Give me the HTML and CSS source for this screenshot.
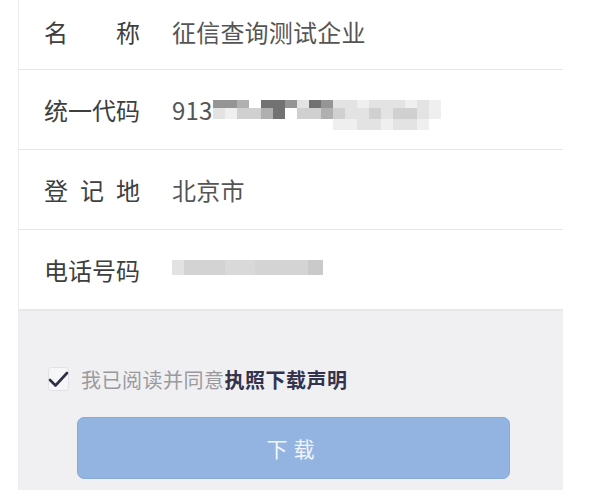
FILE: index.html
```html
<!DOCTYPE html>
<html lang="zh-CN">
<head>
    <meta charset="UTF-8">
    <meta name="viewport" content="width=device-width, initial-scale=1.0">
    <title>执照下载</title>
    <link rel="stylesheet" href="styles.css">
</head>
<body>
    <div class="panel">
        <div class="info">
            <div class="row row-first">
                <span class="label">名 称</span>
                <span class="value">征信查询测试企业</span>
            </div>
            <div class="row">
                <span class="label">统一代码</span>
                <span class="value">913</span>
                <!-- 打码部分 -->
                <div class="mosaic">
                    <i class="m2"></i><i class="m2"></i><i class="m3"></i><i></i><i class="m1"></i><i class="m1"></i><i class="m2"></i><i class="m5"></i><i class="m1"></i><i class="m2"></i><i class="m5"></i><i class="m5"></i><i class="m6"></i><i class="m5"></i><i class="m5"></i><i class="m5"></i><i class="m6"></i><i class="m5"></i><i class="m6"></i>
                    <i class="m5"></i><i class="m6"></i><i class="m4"></i><i class="m4"></i><i class="m3"></i><i class="m1"></i><i></i><i class="m4"></i><i class="m4"></i><i class="m3"></i><i class="m4"></i><i class="m5"></i><i class="m5"></i><i class="m4"></i><i class="m5"></i><i class="m4"></i><i class="m4"></i><i class="m5"></i><i class="m6"></i>
                    <i></i><i></i><i></i><i></i><i></i><i></i><i></i><i></i><i></i><i></i><i class="m6"></i><i class="m6"></i><i class="m5"></i><i class="m5"></i><i class="m6"></i><i class="m5"></i><i class="m5"></i><i class="m6"></i><i></i>
                </div>
            </div>
            <div class="row">
                <span class="label">登 记 地</span>
                <span class="value">北京市</span>
            </div>
            <div class="row">
                <span class="label">电话号码</span>
                <div class="phone-blur"></div>
            </div>
        </div>

        <div class="footer">
            <label class="agree">
                <span class="check">
                    <svg width="22" height="24" viewBox="0 0 22 24">
                        <rect x="0.5" y="0.5" width="20" height="23" rx="3" fill="#f6f6f8" stroke="#e2e2e6"/>
                        <path d="M2 13 L7.5 18.5 L19 6" fill="none" stroke="#2f2f45" stroke-width="2.6" stroke-linecap="round" stroke-linejoin="round"/>
                    </svg>
                </span>
                我已阅读并同意<b>执照下载声明</b>
            </label>
            <button class="download">下载</button>
        </div>
    </div>
</body>
</html>
```

FILE: styles.css
```css
*{
    box-sizing: border-box;
}

body{
    margin: 0;
    background-color: #fff;
    font-family: "Noto Sans CJK SC", "Noto Sans", sans-serif;
}

.panel{
    margin-left: 18px;
    width: 545px;
    border-left: 1px solid #ededed;
}

.row{
    height: 80px;
    display: flex;
    align-items: center;
    padding-left: 25px;
    border-bottom: 1px solid #e6e6e6;
    background-color: #fff;
}

.row-first{
    height: 70px;
    padding-bottom: 6px;
}

.label{
    width: 96px;
    font-size: 24px;
    color: #3e3e3e;
    text-align: justify;
    text-align-last: justify;
    margin-right: 32px;
}

.value{
    font-size: 24px;
    color: #555;
    letter-spacing: 0.2px;
}

/* 打码 */
.mosaic{
    display: grid;
    grid-template-columns: repeat(19, 12px);
    grid-template-rows: 8px 11px 11px;
    margin-top: 10px;
    filter: blur(0.6px);
}

.mosaic i{ display: block; }
.m1{ background-color: #727272; }
.m2{ background-color: #959595; }
.m3{ background-color: #b0b0b0; }
.m4{ background-color: #d0d0d0; }
.m5{ background-color: #e3e3e3; }
.m6{ background-color: #efefef; }

.phone-blur{
    width: 151px;
    height: 15px;
    margin-top: -4px;
    background: linear-gradient(90deg, #e2e2e2 0 8%, #d3d3d3 8% 35%, #d9d9d9 35% 55%, #d4d4d4 55% 90%, #cacaca 90%);
    filter: blur(0.6px);
}

.footer{
    background-color: #f0f0f2;
    padding: 56px 54px 11px 29px;
    border-top: 1px solid #e8e8ea;
}

.agree{
    display: flex;
    align-items: center;
    height: 24px;
    font-size: 20px;
    letter-spacing: 0.5px;
    color: #9a9a9e;
}

.agree b{
    font-weight: bold;
    color: #33334d;
}

.check{
    display: flex;
    margin-right: 11px;
}

.download{
    display: block;
    width: 433px;
    height: 62px;
    margin: 26px 0 0 29px;
    border: 1px solid #87aad9;
    border-radius: 7px;
    background-color: #93b4e1;
    color: #f2f6fc;
    font-family: inherit;
    font-size: 21px;
    letter-spacing: 6px;
    padding-left: 6px;
}
```
